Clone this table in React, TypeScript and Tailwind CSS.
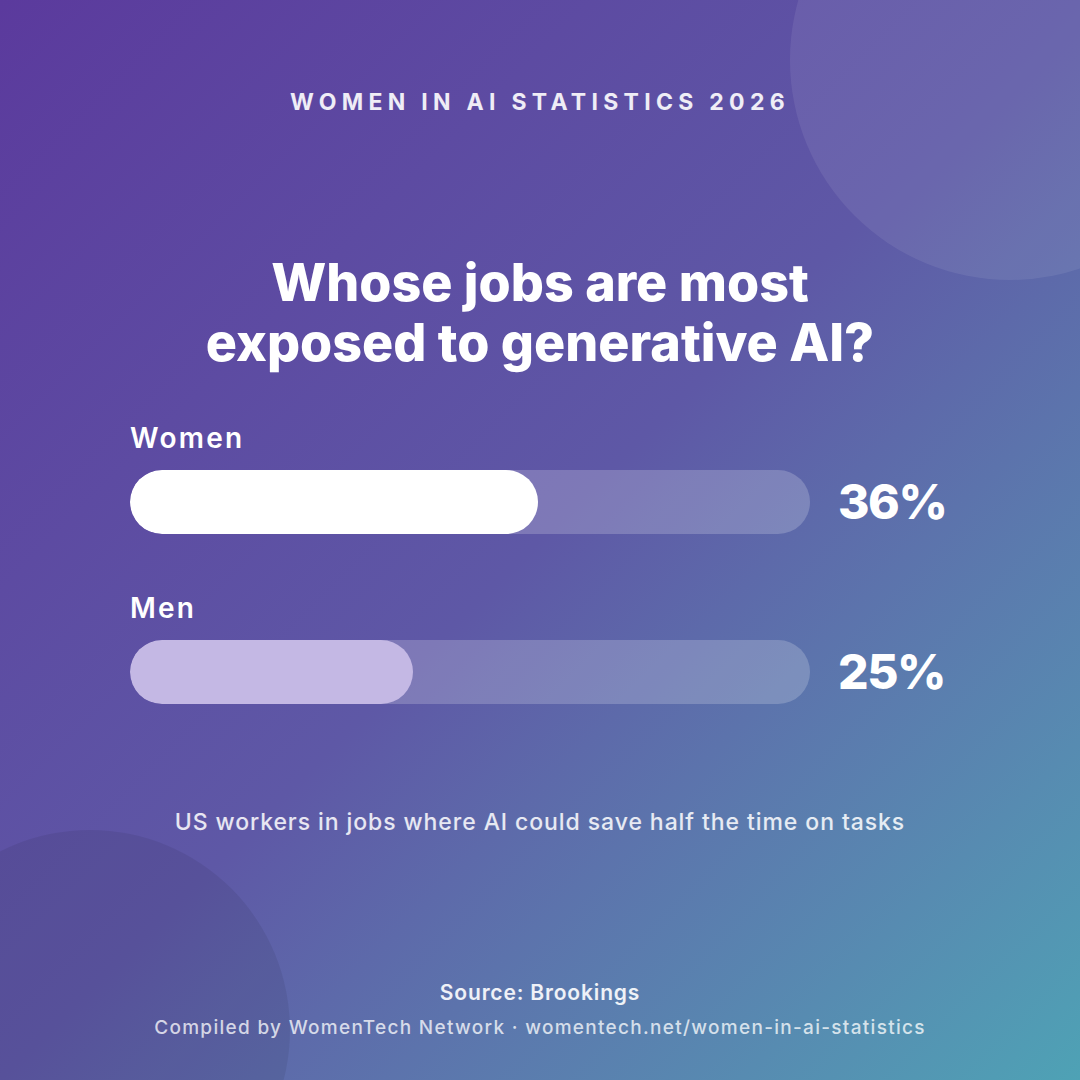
import React from 'react';

interface Stat {
  label: string;
  value: number;
  fill: string;
}

const MAX = 60;

const stats: Stat[] = [
  { label: 'Women', value: 36, fill: 'bg-white' },
  { label: 'Men', value: 25, fill: 'bg-[#c4b8e4]' },
];

const StatBar: React.FC<{ stat: Stat; className?: string }> = ({ stat, className }) => (
  <div className={className}>
    <div className="text-[28px] leading-[32px] font-semibold tracking-[0.08em] text-white">{stat.label}</div>
    <div className="mt-4 flex items-center">
      <div className="w-[680px] h-16 rounded-full bg-white/20 overflow-hidden">
        <div
          className={`h-full rounded-full ${stat.fill}`}
          style={{ width: `${(stat.value / MAX) * 100}%` }}
        />
      </div>
      <div className="ml-[28px] text-[48px] leading-[56px] font-extrabold tracking-[-0.03em] text-white">
        {stat.value}%
      </div>
    </div>
  </div>
);

const App: React.FC = () => {
  return (
    <div
      className="relative w-[1080px] h-[1080px] overflow-hidden bg-linear-135 from-[#5b3a9d] via-[#5e58a6] to-[#4ea2b5]"
      style={{ fontFamily: 'Inter, "Noto Sans", sans-serif' }}
    >
      {/* decorative circles */}
      <div className="absolute left-[790px] top-[-160px] w-[440px] h-[440px] rounded-full bg-white/[0.08]" />
      <div className="absolute left-[-110px] top-[830px] w-[400px] h-[400px] rounded-full bg-black/[0.07]" />

      <div className="relative flex flex-col items-center pt-[86px]">
        <div className="text-[23px] leading-[32px] font-bold tracking-[0.23em] text-white/90">
          WOMEN IN AI STATISTICS 2026
        </div>

        <h1 className="mt-[135px] text-center text-[52px] leading-[60px] font-extrabold text-white">
          Whose jobs are most
          <br />
          exposed to generative AI?
        </h1>

        <div className="w-[820px] mt-[49px]">
          <StatBar stat={stats[0]} />
          <StatBar stat={stats[1]} className="mt-[58px]" />
        </div>

        <p className="mt-[102px] text-[23px] leading-[32px] font-medium tracking-[0.04em] text-white/85">
          US workers in jobs where AI could save half the time on tasks
        </p>

        <p className="mt-[141px] text-[21px] leading-[28px] font-semibold tracking-[0.04em] text-white/90">
          Source: Brookings
        </p>
        <p className="mt-[7px] text-[19px] leading-[28px] font-medium tracking-[0.068em] text-white/75">
          Compiled by WomenTech Network · womentech.net/women-in-ai-statistics
        </p>
      </div>
    </div>
  );
};

export default App;
